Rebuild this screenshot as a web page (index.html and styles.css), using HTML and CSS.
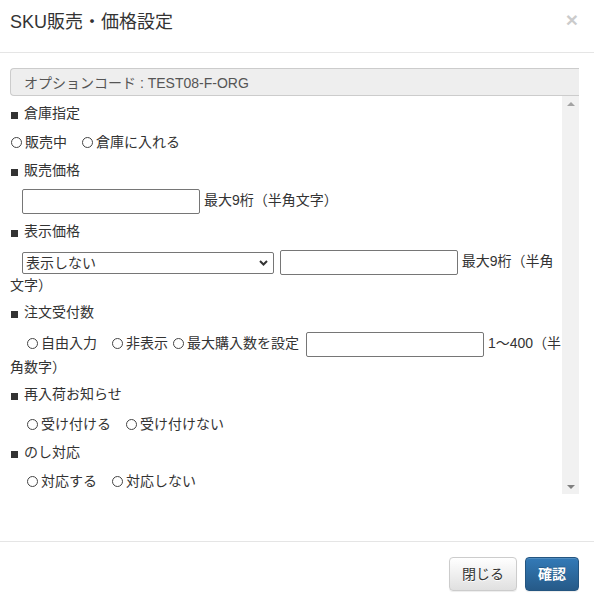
FILE: index.html
```
<!DOCTYPE html>
<html lang="ja">
<head>
<meta charset="utf-8">
<title>SKU販売・価格設定</title>
<link rel="stylesheet" href="styles.css">
</head>
<body>
<div class="modal">
  <header class="modal-header">
    <h4 class="modal-title">SKU販売・価格設定</h4>
    <button class="close" type="button">×</button>
  </header>
  <div class="modal-body">
    <div class="option-code">オプションコード : TEST08-F-ORG</div>
    <div class="scroll-area">
      <div class="scroll-content">
        <div class="sec mt0">倉庫指定</div>
        <div class="row mt9"><label class="opt"><span class="radio"></span>販売中</label><label class="opt"><span class="radio"></span>倉庫に入れる</label></div>

        <div class="sec mt8">販売価格</div>
        <div class="row mt9 ind12"><input class="txt" type="text"> 最大9桁（半角文字）</div>

        <div class="sec mt7">表示価格</div>
        <div class="row mt9 ind12"><span class="select-wrap"><select class="sel"><option>表示しない</option></select><svg class="chev" width="9" height="6" viewBox="0 0 9 6"><path d="M1 1 L4.5 4.5 L8 1" fill="none" stroke="#333" stroke-width="2"/></svg></span> <input class="txt ml2" type="text"> 最大9桁（半角文字）</div>

        <div class="sec mt7">注文受付数</div>
        <div class="row mt10 ind16"><label class="opt"><span class="radio"></span>自由入力</label><label class="opt tight"><span class="radio"></span>非表示</label><label class="opt last"><span class="radio"></span>最大購入数を設定</label><input class="txt ml7" type="text"> <span class="nw">1〜400（半</span><br>角数字）</div>

        <div class="sec mt7">再入荷お知らせ</div>
        <div class="row mt10 ind16"><label class="opt"><span class="radio"></span>受け付ける</label><label class="opt"><span class="radio"></span>受け付けない</label></div>

        <div class="sec mt8">のし対応</div>
        <div class="row mt9 ind16"><label class="opt"><span class="radio"></span>対応する</label><label class="opt"><span class="radio"></span>対応しない</label></div>
      </div>
      <div class="scrollbar"><span class="arrow up"></span><span class="arrow down"></span></div>
    </div>
  </div>
  <footer class="modal-footer">
    <button class="btn btn-default" type="button">閉じる</button>
    <button class="btn btn-primary" type="button">確認</button>
  </footer>
</div>
</body>
</html>
```
FILE: styles.css
```
html, body {
  margin: 0;
  padding: 0;
  background: #fff;
}
body {
  font-family: "Liberation Sans", "Noto Sans CJK JP", sans-serif;
  font-size: 14px;
  color: #333;
}
.modal {
  width: 594px;
  height: 603px;
  display: flex;
  flex-direction: column;
  overflow: hidden;
}
.modal-header {
  display: flex;
  justify-content: space-between;
  align-items: flex-start;
  padding: 10px 16px 17px 10px;
  border-bottom: 1px solid #e5e5e5;
}
.modal-title {
  margin: 0;
  font-size: 18px;
  font-weight: normal;
  line-height: 25px;
  color: #333;
}
.close {
  border: 0;
  background: none;
  padding: 0;
  margin-top: -1px;
  font: bold 21px/21px "Liberation Sans", sans-serif;
  color: #000;
  opacity: 0.2;
}
.modal-body {
  padding: 15px 15px 47px 10px;
}
.option-code {
  height: 28px;
  box-sizing: border-box;
  display: flex;
  align-items: center;
  padding-left: 13px;
  background: #eee;
  border: 1px solid #ccc;
  border-right: 0;
  border-radius: 4px 0 0 4px;
  color: #555;
}
.scroll-area {
  display: flex;
  height: 398px;
}
.scroll-content {
  flex: 1;
  min-width: 0;
  padding-top: 7px;
  line-height: 20px;
}
.scrollbar {
  width: 17px;
  background: #f1f1f1;
  display: flex;
  flex-direction: column;
  justify-content: space-between;
  align-items: center;
  padding: 6px 0 5px;
  box-sizing: border-box;
}
.arrow {
  width: 0;
  height: 0;
  border-left: 4px solid transparent;
  border-right: 4px solid transparent;
}
.arrow.up {
  border-bottom: 4px solid #a3a3a3;
}
.arrow.down {
  border-top: 4px solid #808080;
}
.sec {
  height: 20px;
}
.sec::before {
  content: "";
  display: inline-block;
  width: 7px;
  height: 7px;
  background: #333;
  margin: 0 6px 0 1px;
  vertical-align: -1px;
}
.mt0 { margin-top: 0; }
.mt7 { margin-top: 7px; }
.mt8 { margin-top: 8px; }
.mt9 { margin-top: 9px; }
.mt10 { margin-top: 10px; }
.ind12 { text-indent: 12px; }
.ind16 { text-indent: 16px; }
.opt {
  margin-right: 14px;
  text-indent: 0;
}
.opt.tight { margin-right: 4px; }
.opt.last { margin-right: 0; }
.radio {
  display: inline-block;
  width: 11px;
  height: 11px;
  box-sizing: border-box;
  border: 1px solid #444;
  border-radius: 50%;
  margin: 0 3px 0 1px;
  vertical-align: -1px;
}
.txt {
  width: 178px;
  height: 25px;
  box-sizing: border-box;
  border: 1px solid #767676;
  border-radius: 2px;
  padding: 1px 3px;
  margin: 0;
  font: inherit;
  text-indent: 0;
  vertical-align: middle;
  background: #fff;
}
.ml2 { margin-left: 2px; }
.ml7 { margin-left: 7px; }
.select-wrap {
  display: inline-flex;
  align-items: center;
  vertical-align: middle;
  text-indent: 0;
}
.sel {
  width: 252px;
  height: 22px;
  box-sizing: border-box;
  border: 1px solid #767676;
  border-radius: 2px;
  -webkit-appearance: none;
  appearance: none;
  background: #fff;
  font: 14px "Liberation Sans", "Noto Sans CJK JP", sans-serif;
  color: #333;
  padding: 0 3px;
  margin: 0;
  text-indent: 0;
}
.chev {
  margin-left: -15px;
  margin-right: 6px;
  pointer-events: none;
}
.nw { white-space: nowrap; }
.modal-footer {
  margin-top: auto;
  border-top: 1px solid #e5e5e5;
  padding: 15px 15px 12px;
  display: flex;
  justify-content: flex-end;
  gap: 8px;
}
.btn {
  font: 14px/20px "Liberation Sans", "Noto Sans CJK JP", sans-serif;
  padding: 6px 12px;
  border: 1px solid #ccc;
  border-radius: 4px;
  margin: 0;
}
.btn-default {
  color: #333;
  background: linear-gradient(to bottom, #fff 0, #e0e0e0 100%);
  border-color: #ccc;
  text-shadow: 0 1px 0 #fff;
  box-shadow: inset 0 1px 0 rgba(255,255,255,.15), 0 1px 1px rgba(0,0,0,.075);
}
.btn-primary {
  color: #fff;
  font-weight: bold;
  background: linear-gradient(to bottom, #337ab7 0, #265a88 100%);
  border-color: #245580;
  text-shadow: 0 -1px 0 rgba(0,0,0,.2);
  box-shadow: inset 0 1px 0 rgba(255,255,255,.15), 0 1px 1px rgba(0,0,0,.075);
}
```
